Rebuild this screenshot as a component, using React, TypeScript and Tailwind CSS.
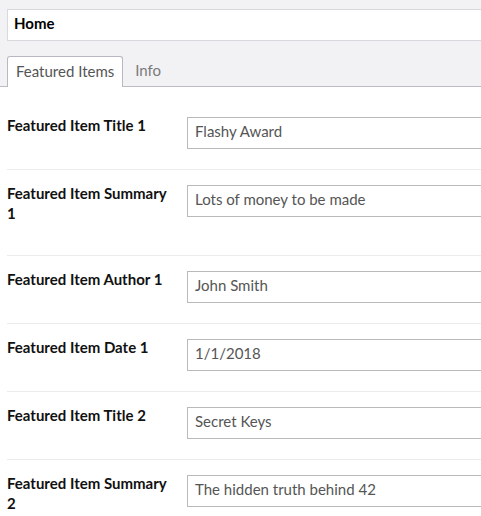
const fields = [
  { label: 'Featured Item Title 1', value: 'Flashy Award' },
  { label: 'Featured Item Summary 1', value: 'Lots of money to be made' },
  { label: 'Featured Item Author 1', value: 'John Smith' },
  { label: 'Featured Item Date 1', value: '1/1/2018' },
  { label: 'Featured Item Title 2', value: 'Secret Keys' },
  { label: 'Featured Item Summary 2', value: 'The hidden truth behind 42' },
]

export default function App() {
  return (
    <div className="h-[516px] w-[481px] overflow-hidden bg-white font-['Lato','Liberation_Sans',sans-serif] text-[15px]">
      <div className="w-[720px]">
        {/* header + tabs */}
        <div className="border-b border-[#bcbcc6] bg-[#f2f2f4] pl-[7px] pt-[9px]">
          <div className="flex h-[32px] items-center border border-[#d8d8de] bg-white pb-[3px] pl-[6px] font-bold text-black">
            Home
          </div>
          <div className="mt-[15px] flex items-end">
            <button
              type="button"
              className="-mb-px flex h-[31px] items-center rounded-t-[3px] border border-b-0 border-[#b8b8c2] bg-white px-[8px] pb-[2px] text-[#555]"
            >
              Featured Items
            </button>
            <button type="button" className="flex h-[30px] items-center px-[12px] pb-[2px] text-[#7a7a7a]">
              Info
            </button>
          </div>
        </div>

        {/* fields */}
        <div className="pl-[7px] pt-[15px]">
          {fields.map((f) => (
            <div key={f.label} className="flex border-b border-[#ececec] pb-[20px] pt-[13px]">
              <label className="mb-[12px] w-[170px] shrink-0 font-bold leading-5 text-[#111]">
                {f.label}
              </label>
              <div className="ml-[10px] mt-[2px] flex h-[32px] w-[480px] items-center border border-[#bababa] pb-[3px] pl-[7px] text-[#555]">
                {f.value}
              </div>
            </div>
          ))}
        </div>
      </div>
    </div>
  )
}
